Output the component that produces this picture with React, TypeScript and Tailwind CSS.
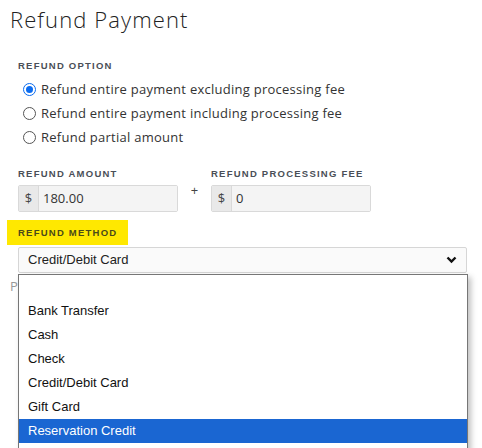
import { useState } from 'react'

const options = ['', 'Bank Transfer', 'Cash', 'Check', 'Credit/Debit Card', 'Gift Card', 'Reservation Credit', 'Other']

const radios = [
    'Refund entire payment excluding processing fee',
    'Refund entire payment including processing fee',
    'Refund partial amount',
]

function Label({ children }: { children: React.ReactNode }) {
    return (
        <div className="text-[9.5px] font-bold tracking-[0.13em] text-[#4a4f57] leading-none font-['Liberation_Sans',sans-serif]">
            {children}
        </div>
    )
}

function MoneyInput({ value }: { value: string }) {
    return (
        <div className="flex w-[160px] h-[27px] border border-[#d9d9d9] rounded-[2px] overflow-hidden">
            <div className="w-[20px] flex items-center justify-center bg-[#e9e9e9] border-r border-[#d9d9d9] text-[13px] text-[#444]">$</div>
            <div className="flex-1 bg-[#f4f4f4] flex items-center pl-[4px] text-[13px] text-[#333]">{value}</div>
        </div>
    )
}

export default function App() {
    const [selected] = useState(0)
    return (
        <div className="w-[482px] h-[448px] overflow-hidden bg-white font-['Open_Sans',sans-serif] relative">
            <h1 className="pl-[10px] pt-[4px] text-[22px] font-light text-[#222] leading-[30px] tracking-[0.05em]">Refund Payment</h1>

            <div className="pl-[18px] pt-[27px]">
                <Label>REFUND OPTION</Label>
                <div className="pt-[7px] flex flex-col">
                    {radios.map((r, i) => (
                        <label key={i} className="flex items-center h-[24px] pl-[5px] gap-[5px] text-[13px] text-[#333] tracking-[0.02em]">
                            {i === selected ? (
                                <span className="w-[13px] h-[13px] rounded-full border-[1.5px] border-[#0b6cf0] flex items-center justify-center">
                                    <span className="w-[7px] h-[7px] rounded-full bg-[#0b6cf0]"></span>
                                </span>
                            ) : (
                                <span className="w-[13px] h-[13px] rounded-full border border-[#555]"></span>
                            )}
                            {r}
                        </label>
                    ))}
                </div>
            </div>

            <div className="pl-[18px] pt-[19px] flex items-start">
                <div className="flex flex-col gap-[7px]">
                    <Label>REFUND AMOUNT</Label>
                    <MoneyInput value="180.00" />
                </div>
                <div className="w-[33px] pt-[12px] text-center text-[13px] text-[#444]">+</div>
                <div className="flex flex-col gap-[7px]">
                    <Label>REFUND PROCESSING FEE</Label>
                    <MoneyInput value="0" />
                </div>
            </div>

            <div className="mt-[8px] ml-[7px] w-[121px] h-[25px] bg-[#ffe800] flex items-center pl-[11px] pt-[1px]">
                <div className="text-[9.5px] font-bold tracking-[0.13em] text-[#4a4a1a] leading-none font-['Liberation_Sans',sans-serif]">REFUND METHOD</div>
            </div>

            <div className="mt-[2px] ml-[18px] w-[449px] h-[26px] border border-[#d6d6d6] rounded-[2px] bg-[#fafafa] flex items-center justify-between px-[9px] font-['Liberation_Sans',sans-serif] text-[13px] text-[#222]">
                <span>Credit/Debit Card</span>
                <svg width="11" height="8" viewBox="0 0 11 8"><path d="M1.5 1.5 L5.5 5.5 L9.5 1.5" stroke="#111" strokeWidth="2.4" fill="none" /></svg>
            </div>

            <div className="pl-[10px] pt-[4px] text-[13px] text-[#999]">Payment note</div>

            <div className="absolute left-[18px] top-[274px] w-[450px] border border-[#767676] bg-white shadow-[3px_3px_6px_rgba(0,0,0,0.25)] font-['Liberation_Sans',sans-serif] text-[13px] text-[#111]">
                {options.map((o, i) => (
                    <div key={i} className={`h-[24px] flex items-center pl-[9px] ${o === 'Reservation Credit' ? 'bg-[#1a66d2] text-white' : ''}`}>
                        {o}
                    </div>
                ))}
            </div>
        </div>
    )
}
